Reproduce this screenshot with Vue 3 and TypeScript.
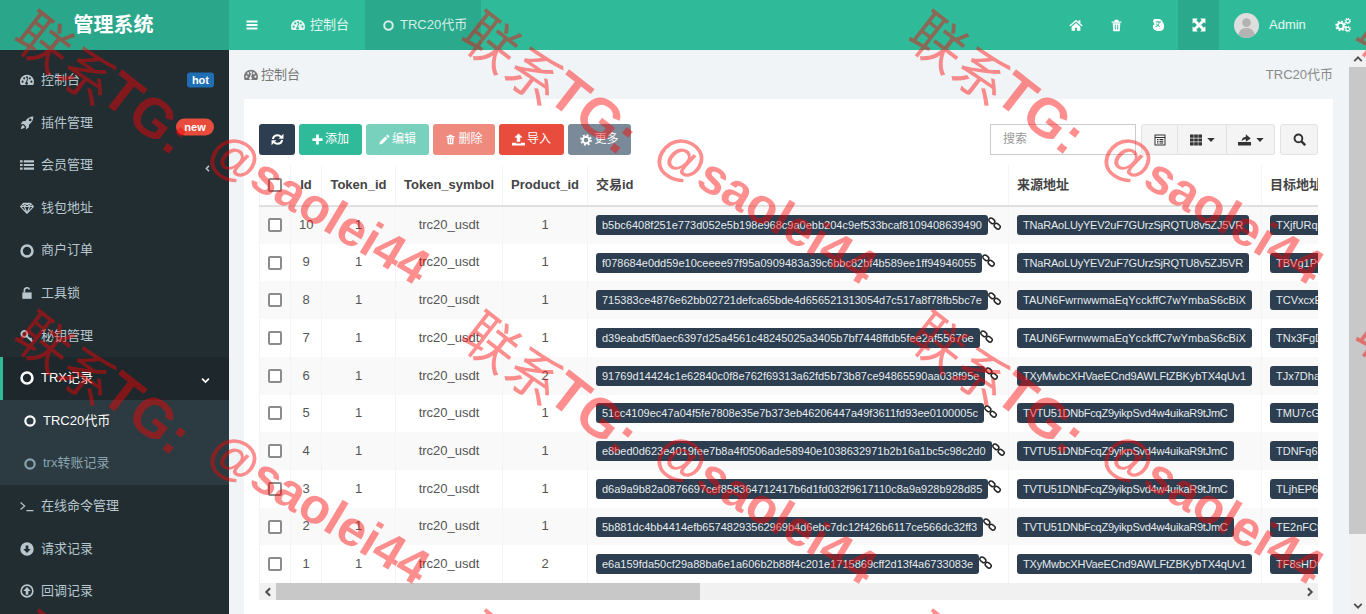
<script setup lang="ts">
interface Row { id: number; product: number; hash: string; from: string; to: string }

const menu = [
  { icon: 'dash', label: '控制台', badge: 'hot' },
  { icon: 'rocket', label: '插件管理', badge: 'new' },
  { icon: 'list', label: '会员管理', arrow: 'left' },
  { icon: 'diamond', label: '钱包地址' },
  { icon: 'circle', label: '商户订单' },
  { icon: 'unlock', label: '工具锁' },
  { icon: 'key', label: '秘钥管理' },
  { icon: 'circle', label: 'TRX记录', arrow: 'down', active: true },
]
const subMenu = [
  { label: 'TRC20代币', active: true },
  { label: 'trx转账记录', active: false },
]
const menuEnd = [
  { icon: 'terminal', label: '在线命令管理' },
  { icon: 'down', label: '请求记录' },
  { icon: 'upo', label: '回调记录' },
]
const A = 'TNaRAoLUyYEV2uF7GUrzSjRQTU8v5ZJ5VR'
const B = 'TAUN6FwrnwwmaEqYcckffC7wYmbaS6cBiX'
const C = 'TXyMwbcXHVaeECnd9AWLFtZBKybTX4qUv1'
const D = 'TVTU51DNbFcqZ9yikpSvd4w4uikaR9tJmC'
const tracking: Record<string, string> = { [A]: '-.2px', [B]: '.06px', [C]: '-.15px', [D]: '-.24px' }
const rows: Row[] = [
  { id: 10, product: 1, hash: 'b5bc6408f251e773d052e5b198e968c9a0ebb204c9ef533bcaf8109408639490', from: A, to: 'TXjfURqi' },
  { id: 9, product: 1, hash: 'f078684e0dd59e10ceeee97f95a0909483a39c6bbc82bf4b589ee1ff94946055', from: A, to: 'TBVg1Pv' },
  { id: 8, product: 1, hash: '715383ce4876e62bb02721defca65bde4d656521313054d7c517a8f78fb5bc7e', from: B, to: 'TCVxcxE' },
  { id: 7, product: 1, hash: 'd39eabd5f0aec6397d25a4561c48245025a3405b7bf7448ffdb5fee2af55676e', from: B, to: 'TNx3FgD' },
  { id: 6, product: 2, hash: '91769d14424c1e62840c0f8e762f69313a62fd5b73b87ce94865590aa038f95e', from: C, to: 'TJx7Dha' },
  { id: 5, product: 1, hash: '51cc4109ec47a04f5fe7808e35e7b373eb46206447a49f3611fd93ee0100005c', from: D, to: 'TMU7cGY' },
  { id: 4, product: 1, hash: 'e8bed0d623e4019fee7b8a4f0506ade58940e1038632971b2b16a1bc5c98c2d0', from: D, to: 'TDNFq6T' },
  { id: 3, product: 1, hash: 'd6a9a9b82a0876697cef858364712417b6d1fd032f9617110c8a9a928b928d85', from: D, to: 'TLjhEP6n' },
  { id: 2, product: 1, hash: '5b881dc4bb4414efb65748293562969b4d6ebc7dc12f426b6117ce566dc32ff3', from: D, to: 'TE2nFCf' },
  { id: 1, product: 2, hash: 'e6a159fda50cf29a88ba6e1a606b2b88f4c201e1715869cff2d13f4a6733083e', from: C, to: 'TF8sHDf' },
]
const tiles = Array.from({ length: 12 }, (_, i) => i)
</script>

<template>
  <div class="app">
    <svg class="sprite" aria-hidden="true">
      <symbol id="i-dash" viewBox="0 0 24 24"><path fill-rule="evenodd" d="M12 3C5.400 3 0 8.400 0 15c0 2.100.5 4 1.400 5.700h21.200c.9-1.700 1.400-3.600 1.400-5.700C24 8.400 18.600 3 12 3zM4.400 16.600a1.800 1.800 0 1 1 0-3.600 1.800 1.800 0 0 1 0 3.600zm2.800-5.600a1.800 1.800 0 1 1 0-3.600 1.800 1.800 0 0 1 0 3.600zM12 9a1.800 1.800 0 1 1 0-3.600A1.800 1.800 0 0 1 12 9zm1.800 8.600a2.500 2.500 0 1 1-3.500-2.300l2-6.200 1.700.5-2 6.200c1 .2 1.800.8 1.800 1.800zm3-6.600a1.800 1.800 0 1 1 0-3.600 1.800 1.800 0 0 1 0 3.600zm2.800 5.600a1.800 1.800 0 1 1 0-3.600 1.800 1.800 0 0 1 0 3.600z"/></symbol>
      <symbol id="i-bars" viewBox="0 0 24 24"><path d="M1 3h22v4.200H1zM1 9.900h22v4.200H1zM1 16.800h22V21H1z"/></symbol>
      <symbol id="i-rocket" viewBox="0 0 24 24"><path fill-rule="evenodd" d="M23 1c-6 .2-10.500 2.700-13.600 7.400L4.500 9 1 14l5.200-.4 4.200 4.200-.4 5.200 5-3.500.6-4.900C20.400 11.500 22.800 7 23 1zm-5.500 8a2.300 2.300 0 1 1 0-4.600 2.300 2.300 0 0 1 0 4.600z"/><path d="M5 15.500C3 16.500 2 19 1.500 22.500c3.500-.5 6-1.500 7-3.500z"/></symbol>
      <symbol id="i-list" viewBox="0 0 24 24"><path d="M0 4h4.500v3.700H0zM6.500 4H24v3.700H6.500zM0 10.200h4.500v3.700H0zM6.500 10.200H24v3.700H6.500zM0 16.400h4.500v3.700H0zM6.500 16.400H24v3.700H6.500z"/></symbol>
      <symbol id="i-diamond" viewBox="0 0 24 24"><path fill="none" stroke="currentColor" stroke-width="1.900" stroke-linejoin="round" d="M6 4h12l5 5.500L12 21 1 9.500zM1 9.500h22M7.500 9.500 12 21l4.500-11.500M6 4l1.500 5.500L12 4l4.500 5.500L18 4"/></symbol>
      <symbol id="i-circle" viewBox="0 0 24 24"><circle cx="12" cy="12" r="9.300" fill="none" stroke="currentColor" stroke-width="4.400"/></symbol>
      <symbol id="i-unlock" viewBox="0 0 24 24"><path d="M4 11h16v11H4z"/><path fill="none" stroke="currentColor" stroke-width="2.800" d="M7.500 11V7.500a4.500 4.500 0 0 1 8.700-1.500"/></symbol>
      <symbol id="i-key" viewBox="0 0 24 24"><circle cx="7.500" cy="8.500" r="5" fill="none" stroke="currentColor" stroke-width="3.400"/><path fill="none" stroke="currentColor" stroke-width="3" d="M11 12l10 9M17.500 18l2.500-2.500"/></symbol>
      <symbol id="i-terminal" viewBox="0 0 24 24"><path fill="none" stroke="currentColor" stroke-width="2" d="M1 6l7 6-7 6M11 20h12"/></symbol>
      <symbol id="i-down" viewBox="0 0 24 24"><path fill-rule="evenodd" d="M12 .5a11.500 11.500 0 1 0 0 23 11.500 11.500 0 0 0 0-23zM5.500 12h4.200V6h4.600v6h4.200L12 19z"/></symbol>
      <symbol id="i-upo" viewBox="0 0 24 24"><circle cx="12" cy="12" r="10" fill="none" stroke="currentColor" stroke-width="2.800"/><path d="M12 5l6.500 7h-4.200v6.500H9.700V12H5.500z"/></symbol>
      <symbol id="i-left" viewBox="0 0 24 24"><path fill="none" stroke="currentColor" stroke-width="5" d="M17 3l-9 9 9 9"/></symbol>
      <symbol id="i-right" viewBox="0 0 24 24"><path fill="none" stroke="currentColor" stroke-width="5" d="M7 3l9 9-9 9"/></symbol>
      <symbol id="i-chev" viewBox="0 0 24 24"><path fill="none" stroke="currentColor" stroke-width="4.500" d="M3 7l9 9 9-9"/></symbol>
      <symbol id="i-chevu" viewBox="0 0 24 24"><path fill="none" stroke="currentColor" stroke-width="4.500" d="M3 17l9-9 9 9"/></symbol>
      <symbol id="i-home" viewBox="0 0 24 24"><path d="M12 3 .5 13l1.500 1.700L12 6l10 8.700 1.500-1.700L19.500 9.600V4h-3.200v2.800zM4.500 15v7h5.800v-5.500h3.400V22h5.800v-7L12 8.500z"/></symbol>
      <symbol id="i-trash" viewBox="0 0 24 24"><path fill-rule="evenodd" d="M9 1.500h6L16.500 4.500H21V7H3V4.500h4.500zM5 8h14l-1 14.500H6zM8.800 10.500v9h1.800v-9zm4.600 0v9h1.800v-9z"/></symbol>
      <symbol id="i-lang" viewBox="0 0 24 24"><path fill-rule="evenodd" d="M6 1.500h8c3.500 1 5.500 3 6.500 6 2.500 3 2.700 9 .5 12-2.500 3-10 3.500-14 1.500-3.500-2-4.500-5-3.500-8.500l2.500-1.500L3.500 6c0-2 1-4 2.500-4.500zM8 6v1.500h5.500c-.3 1.500-1 2.800-2 4-.8-.7-1.300-1.400-1.700-2.200L8.500 10c.5 1 1.200 2 2 2.800-1 .8-2 1.400-3 1.800l.6 1.300c1.200-.5 2.400-1.200 3.400-2.100 1 .8 2.300 1.400 3.500 1.800l.5-1.400c-1.100-.3-2.100-.8-3-1.400 1.200-1.400 2-3 2.400-5.100H17V6h-3.500L13 4.500h-1.500L12 6z"/></symbol>
      <symbol id="i-expand" viewBox="0 0 24 24"><path d="M1 1h9L7.300 3.700 12 8.400l4.700-4.700L14 1h9v9l-2.700-2.700L15.600 12l4.700 4.700L23 14v9h-9l2.700-2.700L12 15.600l-4.700 4.700L10 23H1v-9l2.700 2.700L8.400 12 3.700 7.300 1 10z"/></symbol>
      <symbol id="i-gear" viewBox="0 0 24 24"><circle cx="12" cy="12" r="6.500" fill="none" stroke="currentColor" stroke-width="4"/><circle cx="12" cy="12" r="9.700" fill="none" stroke="currentColor" stroke-width="3.800" stroke-dasharray="3.800 3.820"/></symbol>
      <symbol id="i-cogs" viewBox="0 0 24 24"><g transform="translate(0 5) scale(.7)"><circle cx="12" cy="12" r="6.500" fill="none" stroke="currentColor" stroke-width="4"/><circle cx="12" cy="12" r="9.700" fill="none" stroke="currentColor" stroke-width="3.800" stroke-dasharray="3.800 3.820"/></g><g transform="translate(14 1) scale(.42)"><circle cx="12" cy="12" r="6.500" fill="none" stroke="currentColor" stroke-width="4"/><circle cx="12" cy="12" r="9.700" fill="none" stroke="currentColor" stroke-width="3.800" stroke-dasharray="3.800 3.820"/></g><g transform="translate(14 13) scale(.42)"><circle cx="12" cy="12" r="6.500" fill="none" stroke="currentColor" stroke-width="4"/><circle cx="12" cy="12" r="9.700" fill="none" stroke="currentColor" stroke-width="3.800" stroke-dasharray="3.800 3.820"/></g></symbol>
      <symbol id="i-refresh" viewBox="0 0 24 24"><path fill="none" stroke="currentColor" stroke-width="3.800" d="M3.500 11c.8-4.300 4.200-7 8.500-7 2.800 0 4.900 1.100 6.400 3M20.500 13c-.8 4.300-4.200 7-8.500 7-2.800 0-4.900-1.100-6.400-3"/><path d="M23 1.500v9h-9zM1 22.500v-9h9z"/></symbol>
      <symbol id="i-plus" viewBox="0 0 24 24"><path d="M9 1h6v8h8v6h-8v8H9v-8H1V9h8z"/></symbol>
      <symbol id="i-pencil" viewBox="0 0 24 24"><path d="M18.500 1l4.500 4.500-3 3L15.500 4zM14 5.500l4.500 4.500L7 22l-6 1 1-6z"/></symbol>
      <symbol id="i-upload" viewBox="0 0 24 24"><path d="M12 1l7.500 7.500h-4.300V16H8.800V8.500H4.500zM0 18h7.500v1.500h9V18H24v5H0z"/></symbol>
      <symbol id="i-table" viewBox="0 0 24 24"><path fill-rule="evenodd" d="M1 1h22v22H1zM3 3v3h18V3zm0 5v13h18V8zm3 2h3v2.200H6zm5 0h7.500v2.200H11zm-5 3.500h3v2.200H6zm5 0h7.500v2.200H11zM6 17h3v2.200H6zm5 0h7.500v2.200H11z"/></symbol>
      <symbol id="i-th" viewBox="0 0 24 24"><path d="M0 1h7.300v6.300H0zM8.400 1h7.300v6.300H8.400zM16.700 1H24v6.300h-7.300zM0 8.800h7.300v6.300H0zM8.400 8.800h7.300v6.300H8.400zM16.700 8.800H24v6.300h-7.300zM0 16.600h7.300v6.300H0zM8.400 16.600h7.300v6.300H8.400zM16.700 16.600H24v6.300h-7.300z"/></symbol>
      <symbol id="i-caret" viewBox="0 0 24 24"><path d="M1 6h22L12 18z"/></symbol>
      <symbol id="i-export" viewBox="0 0 24 24"><path d="M0 16.500h24V23H0zM6.500 15c.5-4.500 3-7.500 8-8V2.500l9 7.500-9 6v-4.500c-3.500.2-5.800 1.500-8 3.500z"/></symbol>
      <symbol id="i-search" viewBox="0 0 24 24"><circle cx="10" cy="10" r="7.200" fill="none" stroke="currentColor" stroke-width="3.600"/><path fill="none" stroke="currentColor" stroke-width="4.400" d="M15 15l7.500 7.500"/></symbol>
      <symbol id="i-chain" viewBox="0 0 24 24"><g fill="none" stroke="currentColor" stroke-width="2.800"><rect x="1" y="3" width="12" height="8" rx="4" transform="rotate(40 7 7)"/><rect x="11" y="13" width="12" height="8" rx="4" transform="rotate(40 17 17)"/></g></symbol>
    </svg>

    <header class="topbar">
      <div class="logo">管理系统</div>
      <nav class="nav">
        <a class="toggle"><svg class="ic"><use href="#i-bars" /></svg></a>
        <a class="tab"><svg class="ic ic-14"><use href="#i-dash" /></svg>控制台</a>
        <a class="tab tab-on"><svg class="ic ic-11"><use href="#i-circle" /></svg>TRC20代币</a>
        <div class="nav-right">
          <a class="nav-ic"><svg class="ic"><use href="#i-home" /></svg></a>
          <a class="nav-ic"><svg class="ic ic-13"><use href="#i-trash" /></svg></a>
          <a class="nav-ic"><svg class="ic"><use href="#i-lang" /></svg></a>
          <a class="nav-ic nav-ic-on"><svg class="ic"><use href="#i-expand" /></svg></a>
          <a class="user">
            <svg class="avatar" viewBox="0 0 26 26">
              <circle cx="13" cy="13" r="13" fill="#dedede" />
              <circle cx="13" cy="10" r="4.500" fill="#b3b3b3" />
              <path d="M4.500 22.500c1-5 4.500-7 8.500-7s7.500 2 8.500 7A13 13 0 0 1 13 26a13 13 0 0 1-8.500-3.500z" fill="#b3b3b3" />
            </svg>
            Admin
          </a>
          <a class="nav-ic nav-cog"><svg class="ic"><use href="#i-cogs" /></svg></a>
        </div>
      </nav>
    </header>

    <div class="body">
      <aside class="sidebar">
        <a v-for="m in menu" :key="m.label" class="item" :class="{ 'item-on': m.active }">
          <svg class="ic ic-14 item-ic"><use :href="'#i-' + m.icon" /></svg>
          <span>{{ m.label }}</span>
          <em v-if="m.badge" class="badge" :class="'badge-' + m.badge">{{ m.badge }}</em>
          <svg v-if="m.arrow === 'left'" class="ic ic-7 arrow"><use href="#i-left" /></svg>
          <svg v-if="m.arrow === 'down'" class="ic ic-9 arrow-d"><use href="#i-chev" /></svg>
        </a>
        <div class="sub">
          <a v-for="s in subMenu" :key="s.label" class="sub-item" :class="{ 'sub-on': s.active }">
            <svg class="ic ic-12"><use href="#i-circle" /></svg>{{ s.label }}
          </a>
        </div>
        <a v-for="m in menuEnd" :key="m.label" class="item">
          <svg class="ic ic-14 item-ic"><use :href="'#i-' + m.icon" /></svg>
          <span>{{ m.label }}</span>
        </a>
      </aside>

      <main class="content">
        <div class="crumbs">
          <span class="crumb"><svg class="ic ic-14"><use href="#i-dash" /></svg>控制台</span>
          <span class="crumb-r">TRC20代币</span>
        </div>
        <section class="panel">
          <div class="tools">
            <button class="btn b-navy"><svg class="ic ic-13"><use href="#i-refresh" /></svg></button>
            <button class="btn b-green"><svg class="ic ic-11"><use href="#i-plus" /></svg>添加</button>
            <button class="btn b-green off"><svg class="ic ic-11"><use href="#i-pencil" /></svg>编辑</button>
            <button class="btn b-red off"><svg class="ic ic-11"><use href="#i-trash" /></svg>删除</button>
            <button class="btn b-red"><svg class="ic ic-13"><use href="#i-upload" /></svg>导入</button>
            <button class="btn b-gray"><svg class="ic ic-12"><use href="#i-gear" /></svg>更多</button>
            <input class="search" placeholder="搜索" />
            <div class="group">
              <button class="gbtn g-list"><svg class="ic ic-12"><use href="#i-table" /></svg></button>
              <button class="gbtn g-th"><svg class="ic ic-12"><use href="#i-th" /></svg><svg class="ic ic-8"><use href="#i-caret" /></svg></button>
              <button class="gbtn g-ex"><svg class="ic ic-13"><use href="#i-export" /></svg><svg class="ic ic-8"><use href="#i-caret" /></svg></button>
            </div>
            <button class="gbtn g-search"><svg class="ic ic-13"><use href="#i-search" /></svg></button>
          </div>

          <div class="table-wrap">
            <table class="grid">
              <colgroup>
                <col class="c31" /><col class="c31" /><col class="c74" />
                <col class="c107" /><col class="c85" /><col class="c421" />
                <col class="c253" /><col class="c300" />
              </colgroup>
              <thead>
                <tr>
                  <th><input type="checkbox" class="chk" /></th>
                  <th>Id</th><th>Token_id</th><th>Token_symbol</th><th>Product_id</th>
                  <th class="l">交易id</th><th class="l">来源地址</th><th class="l">目标地址</th>
                </tr>
              </thead>
              <tbody>
                <tr v-for="r in rows" :key="r.id">
                  <td><input type="checkbox" class="chk" /></td>
                  <td>{{ r.id }}</td>
                  <td>1</td>
                  <td>trc20_usdt</td>
                  <td>{{ r.product }}</td>
                  <td class="l"><span class="tag">{{ r.hash }}</span><svg class="ic chain"><use href="#i-chain" /></svg></td>
                  <td class="l"><span class="tag" :style="{ letterSpacing: tracking[r.from] }">{{ r.from }}</span></td>
                  <td class="l"><span class="tag tag-to">{{ r.to }}</span></td>
                </tr>
              </tbody>
            </table>
          </div>
          <div class="hbar">
            <span class="sb-btn"><svg class="ic sb-ic"><use href="#i-left" /></svg></span>
            <span class="hthumb"></span>
            <span class="hspace"></span>
            <span class="sb-btn"><svg class="ic sb-ic"><use href="#i-right" /></svg></span>
          </div>
        </section>
      </main>

      <div class="vbar">
        <span class="sb-v"><svg class="ic sb-ic"><use href="#i-chevu" /></svg></span>
        <span class="vthumb"></span>
        <span class="vspace"></span>
        <span class="sb-v"><svg class="ic sb-ic"><use href="#i-chev" /></svg></span>
      </div>
    </div>

    <div class="marks" aria-hidden="true">
      <div v-for="t in tiles" :key="t" class="tile">
        <span class="mark m1"><i>联系</i>TG:</span>
        <span class="mark m2">@saolei44</span>
      </div>
    </div>
  </div>
</template>

<style>
html, body { margin: 0; overflow: hidden; }
</style>

<style scoped>
.app {
  position: relative;
  height: 614px;
  overflow: hidden;
  display: flex;
  flex-direction: column;
  font: 13px/1.42 "Liberation Sans", "Noto Sans CJK SC", sans-serif;
  color: #444;
  background: #f1f4f6;
}
a { color: inherit; text-decoration: none; }
.sprite { position: absolute; width: 0; height: 0; }
.ic { width: 14px; height: 14px; fill: currentColor; flex: none; display: block; }
.ic-7 { width: 7px; height: 9px; }
.ic-8 { width: 8px; height: 8px; }
.ic-9 { width: 9px; height: 9px; }
.ic-11 { width: 11px; height: 11px; }
.ic-12 { width: 12px; height: 12px; }
.ic-13 { width: 13px; height: 13px; }
.ic-14 { width: 14px; height: 14px; }

.topbar { display: flex; height: 50px; flex: none; color: #fff; }
.logo {
  width: 229px;
  box-sizing: border-box;
  padding-right: 2px;
  background: #2aa68b;
  font-size: 20px;
  font-weight: 700;
  text-align: center;
  line-height: 50px;
}
.nav { flex: 1; display: flex; align-items: center; height: 50px; background: #2fbb9a; }
.toggle { width: 46px; height: 50px; display: flex; align-items: center; justify-content: center; }
.toggle .ic { width: 12px; height: 12px; }
.tab { display: flex; align-items: center; gap: 5px; height: 50px; padding: 0 16px; color: #e3f6f1; }
.tab-on { background: #2aa98c; gap: 6px; padding: 0 15px 0 18px; color: #d5efe8; width: 116px; box-sizing: border-box; white-space: nowrap; }
.nav-right { margin-left: auto; display: flex; align-items: center; height: 50px; }
.nav-ic { width: 41px; height: 50px; display: flex; align-items: center; justify-content: center; }
.nav-ic-on { background: #2aa98c; }
.nav-cog { width: 47px; }
.nav-cog .ic { width: 16px; height: 16px; }
.user { display: flex; align-items: center; gap: 10px; padding-left: 15px; color: #e8f8f4; width: 100px; box-sizing: border-box; }
.avatar { width: 25px; height: 25px; flex: none; }

.body { flex: 1; display: flex; min-height: 0; }
.sidebar {
  width: 229px;
  flex: none;
  background: #222d32;
  padding-top: 9px;
  box-sizing: border-box;
  color: #b8c7ce;
  overflow: hidden;
}
.item { position: relative; display: flex; align-items: center; height: 42.6px; padding-left: 20px; }
.item-ic { margin-right: 7px; }
.item-on { background: #1e282c; color: #fff; box-shadow: inset 3px 0 0 #2fbb9a; }
.badge {
  position: absolute;
  right: 15px;
  top: 50%;
  transform: translateY(-50%);
  font-style: normal;
  font-weight: 700;
  font-size: 11px;
  line-height: 1;
  color: #fff;
}
.badge-hot { background: #1f6fb5; padding: 2px 5px; height: 15px; box-sizing: border-box; border-radius: 3px; }
.badge-new { background: #e74c3c; padding: 3px 6px; height: 17px; box-sizing: border-box; border-radius: 9px; width: 38px; text-align: center; top: 60%; }
.arrow { position: absolute; right: 18px; top: 20px; }
.arrow-d { position: absolute; right: 19px; top: 19px; }
.sub { background: #2c3b41; color: #8aa4af; }
.sub-item { display: flex; align-items: center; gap: 7px; height: 42.6px; padding-left: 24px; }
.sub-on { color: #fff; }

.content { flex: 1; min-width: 0; padding: 0 16px 0 15px; display: flex; flex-direction: column; }
.crumbs { display: flex; justify-content: space-between; align-items: center; height: 47px; padding-top: 2px; color: #777; flex: none; }
.crumb { display: flex; align-items: center; gap: 3px; }
.crumb-r { color: #8a8a8a; }
.panel { flex: 1; background: #fff; padding: 25px 15px 0; min-height: 0; }
.tools { display: flex; align-items: stretch; height: 31px; gap: 4px; }
.btn {
  display: flex;
  align-items: center;
  justify-content: center;
  gap: 2px;
  border: 0;
  border-radius: 3px;
  color: #fff;
  font: inherit;
  font-size: 12px;
  padding: 0;
  width: 63px;
}
.b-navy { background: #2c3e50; width: 36px; }
.b-green { background: #2fba9a; }
.b-red { background: #e74c3c; width: 62px; }
.b-red:not(.off) { width: 65px; }
.b-gray { background: #7b8a98; }
.off { opacity: .65; }
.search {
  margin-left: auto;
  width: 146px;
  box-sizing: border-box;
  border: 1px solid #ccc;
  padding: 0 12px;
  font: inherit;
  font-size: 12px;
  outline: 0;
  margin-right: 1px;
}
.search::placeholder { color: #999; }
.group { display: flex; }
.gbtn {
  display: flex;
  align-items: center;
  justify-content: center;
  gap: 5px;
  box-sizing: border-box;
  background: #f4f4f4;
  border: 1px solid #e2e2e2;
  color: #333;
  padding: 0;
  margin: 0;
}
.g-list { width: 37px; border-radius: 3px 0 0 3px; }
.g-th { width: 49px; border-left: 0; }
.g-ex { width: 48px; border-left: 0; border-radius: 0 3px 3px 0; }
.g-search { width: 38px; border-radius: 3px; margin-left: 1px; }

.table-wrap { margin-top: 10px; overflow: hidden; }
.grid { border-collapse: collapse; table-layout: fixed; width: 1302px; }
.c31 { width: 31px; }
.c74 { width: 74px; }
.c107 { width: 107px; }
.c85 { width: 85px; }
.c421 { width: 421px; }
.c253 { width: 253px; }
.c300 { width: 300px; }
.grid th, .grid td { border: 1px solid #f4f4f4; text-align: center; padding: 0 8px; white-space: nowrap; overflow: hidden; box-sizing: border-box; }
.grid th { height: 41px; font-weight: 700; border-top: 0; border-bottom: 2px solid #e0e0e0; }
.grid td { height: 37.72px; color: #555; border-top: 0; border-bottom: 0; }
.grid tbody tr:nth-child(odd) td { background: #f9f9f9; }
.grid .l { text-align: left; }
.chk {
  appearance: none;
  display: block;
  width: 14px;
  height: 14px;
  margin: 0 auto;
  box-sizing: border-box;
  border: 2px solid #8c8c8c;
  border-radius: 2px;
  background: #fff;
}
.tag {
  display: inline-block;
  vertical-align: middle;
  background: #2c3e50;
  color: #e6ebee;
  border-radius: 3px;
  font-size: 11px;
  line-height: 20px;
  padding: 0 6px;
}
.tag-to { min-width: 120px; }
.chain { display: inline-block; vertical-align: middle; width: 13px; height: 13px; margin: -4px 0 0 0; color: #222; }

.hbar { display: flex; height: 17px; background: #f1f1f1; }
.sb-btn { width: 17px; display: flex; align-items: center; justify-content: center; color: #505050; }
.sb-ic { width: 10px; height: 10px; }
.hthumb { width: 424px; background: #c8c8c8; }
.hspace { flex: 1; }

.vbar { width: 17px; flex: none; background: #f1f1f1; display: flex; flex-direction: column; }
.sb-v { height: 17px; flex: none; display: flex; align-items: center; justify-content: center; color: #505050; }
.vthumb { height: 467px; background: #c8c8c8; flex: none; }
.vspace { flex: 1; }

.marks {
  position: absolute;
  inset: 0;
  overflow: hidden;
  pointer-events: none;
  display: grid;
  grid-template-columns: repeat(4, 447px);
  grid-auto-rows: 300px;
}
.tile { position: relative; }
.mark {
  position: absolute;
  white-space: nowrap;
  color: rgba(255, 0, 0, .44);
  font-family: "Liberation Sans", "Noto Sans CJK SC", sans-serif;
  font-weight: 700;
  line-height: 1;
  transform-origin: 0 50%;
}
.mark i { font-style: normal; font-weight: 400; position: relative; top: 9px; left: 5px; }
.m1 { left: 23px; top: -11px; font-size: 55px; transform: rotate(38deg); }
.m2 { left: 214px; top: 120px; font-size: 50px; transform: rotate(31deg); }
</style>
